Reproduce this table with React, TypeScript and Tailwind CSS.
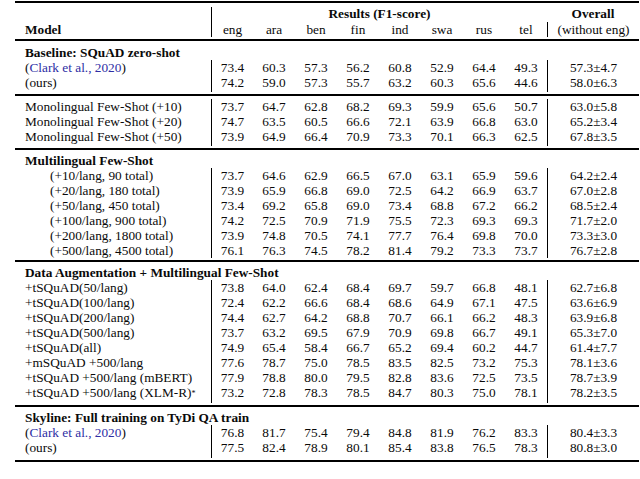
import React from "react";

type Row = { label: React.ReactNode; vals: string[]; overall: string; indent?: boolean };
type Section = { title?: string; rows: Row[]; pb: string; mt: string };

const LANGS = ["eng", "ara", "ben", "fin", "ind", "swa", "rus", "tel"];

const v = (s: string) => s.split(" ");

const Cite = () => (
  <>
    (<span className="text-[#2e2ea4]">Clark et al., 2020</span>)
  </>
);

const SECTIONS: Section[] = [
  {
    title: "Baseline: SQuAD zero-shot",
    mt: "mt-[4px]",
    pb: "pb-[2px]",
    rows: [
      { label: <Cite />, vals: v("73.4 60.3 57.3 56.2 60.8 52.9 64.4 49.3"), overall: "57.3±4.7" },
      { label: "(ours)", vals: v("74.2 59.0 57.3 55.7 63.2 60.3 65.6 44.6"), overall: "58.0±6.3" },
    ],
  },
  {
    mt: "mt-[3px]",
    pb: "pb-[2px]",
    rows: [
      { label: "Monolingual Few-Shot (+10)", vals: v("73.7 64.7 62.8 68.2 69.3 59.9 65.6 50.7"), overall: "63.0±5.8" },
      { label: "Monolingual Few-Shot (+20)", vals: v("74.7 63.5 60.5 66.6 72.1 63.9 66.8 63.0"), overall: "65.2±3.4" },
      { label: "Monolingual Few-Shot (+50)", vals: v("73.9 64.9 66.4 70.9 73.3 70.1 66.3 62.5"), overall: "67.8±3.5" },
    ],
  },
  {
    title: "Multilingual Few-Shot",
    mt: "mt-[3px]",
    pb: "pb-[0px]",
    rows: [
      { indent: true, label: "(+10/lang, 90 total)", vals: v("73.7 64.6 62.9 66.5 67.0 63.1 65.9 59.6"), overall: "64.2±2.4" },
      { indent: true, label: "(+20/lang, 180 total)", vals: v("73.9 65.9 66.8 69.0 72.5 64.2 66.9 63.7"), overall: "67.0±2.8" },
      { indent: true, label: "(+50/lang, 450 total)", vals: v("73.4 69.2 65.8 69.0 73.4 68.8 67.2 66.2"), overall: "68.5±2.4" },
      { indent: true, label: "(+100/lang, 900 total)", vals: v("74.2 72.5 70.9 71.9 75.5 72.3 69.3 69.3"), overall: "71.7±2.0" },
      { indent: true, label: "(+200/lang, 1800 total)", vals: v("73.9 74.8 70.5 74.1 77.7 76.4 69.8 70.0"), overall: "73.3±3.0" },
      { indent: true, label: "(+500/lang, 4500 total)", vals: v("76.1 76.3 74.5 78.2 81.4 79.2 73.3 73.7"), overall: "76.7±2.8" },
    ],
  },
  {
    title: "Data Augmentation + Multilingual Few-Shot",
    mt: "mt-[3px]",
    pb: "pb-[3px]",
    rows: [
      { label: "+tSQuAD(50/lang)", vals: v("73.8 64.0 62.4 68.4 69.7 59.7 66.8 48.1"), overall: "62.7±6.8" },
      { label: "+tSQuAD(100/lang)", vals: v("72.4 62.2 66.6 68.4 68.6 64.9 67.1 47.5"), overall: "63.6±6.9" },
      { label: "+tSQuAD(200/lang)", vals: v("74.4 62.7 64.2 68.8 70.7 66.1 66.2 48.3"), overall: "63.9±6.8" },
      { label: "+tSQuAD(500/lang)", vals: v("73.7 63.2 69.5 67.9 70.9 69.8 66.7 49.1"), overall: "65.3±7.0" },
      { label: "+tSQuAD(all)", vals: v("74.9 65.4 58.4 66.7 65.2 69.4 60.2 44.7"), overall: "61.4±7.7" },
      { label: "+mSQuAD +500/lang", vals: v("77.6 78.7 75.0 78.5 83.5 82.5 73.2 75.3"), overall: "78.1±3.6" },
      { label: "+tSQuAD +500/lang (mBERT)", vals: v("77.9 78.8 80.0 79.5 82.8 83.6 72.5 73.5"), overall: "78.7±3.9" },
      {
        label: (
          <>
            +tSQuAD +500/lang (XLM-R)<sup className="text-[8px] relative -top-[1px]">*</sup>
          </>
        ),
        vals: v("73.2 72.8 78.3 78.5 84.7 80.3 75.0 78.1"),
        overall: "78.2±3.5",
      },
    ],
  },
  {
    title: "Skyline: Full training on TyDi QA train",
    mt: "mt-[3px]",
    pb: "pb-[3px]",
    rows: [
      { label: <Cite />, vals: v("76.8 81.7 75.4 79.4 84.8 81.9 76.2 83.3"), overall: "80.4±3.3" },
      { label: "(ours)", vals: v("77.5 82.4 78.9 80.1 85.4 83.8 76.5 78.3"), overall: "80.8±3.0" },
    ],
  },
];

function DataRow({ row, last, pb }: { row: Row; last: boolean; pb: string }) {
  const pad = last ? pb : "";
  return (
    <div className="flex leading-[15px]">
      <div className={`w-[196px] whitespace-nowrap ${row.indent ? "pl-[35px]" : "pl-[10px]"} ${pad}`}>{row.label}</div>
      {row.vals.map((x, i) => (
        <div key={i} className={`w-[42px] text-center ${i === 0 ? "border-l border-black" : ""} ${pad}`}>
          {x}
        </div>
      ))}
      <div className={`w-[92px] text-center border-l border-black ${pad}`}>{row.overall}</div>
    </div>
  );
}

export default function App() {
  return (
    <div className="w-[640px] h-[479px] bg-white text-[#0a0a0a] font-serif text-[13.3px] pt-[1px] pl-[15px]">
      <div className="w-[624px] flex flex-col font-['Liberation_Serif']">
        <div className="h-[2px] bg-black" />

        {/* header */}
        <div className="flex mt-[4px] h-[14px] leading-[14px] font-bold">
          <div className="w-[196px]" />
          <div className="w-[336px] text-center border-l border-black">Results (F1-score)</div>
          <div className="w-[92px] text-center">Overall</div>
        </div>
        <div className="flex h-[16px] leading-[15px] pt-[1px]">
          <div className="w-[196px] pl-[10px] font-bold">Model</div>
          {LANGS.map((l, i) => (
            <div key={l} className={`w-[42px] text-center ${i === 0 ? "border-l border-black -mt-[1px] pt-[1px]" : ""}`}>
              {l}
            </div>
          ))}
          <div className="w-[92px] text-center border-l border-black">(without eng)</div>
        </div>
        <div className="h-[2px] bg-black mt-[2px]" />

        {SECTIONS.map((s, si) => (
          <div key={si} className="flex flex-col">
            <div className={s.mt}>
              {s.title && <div className="h-[15px] leading-[15px] pl-[10px] font-bold whitespace-nowrap">{s.title}</div>}
              {s.rows.map((r, ri) => (
                <DataRow key={ri} row={r} last={ri === s.rows.length - 1} pb={s.pb} />
              ))}
            </div>
            <div className="h-[2px] bg-black mt-[2px]" />
          </div>
        ))}
      </div>
    </div>
  );
}
